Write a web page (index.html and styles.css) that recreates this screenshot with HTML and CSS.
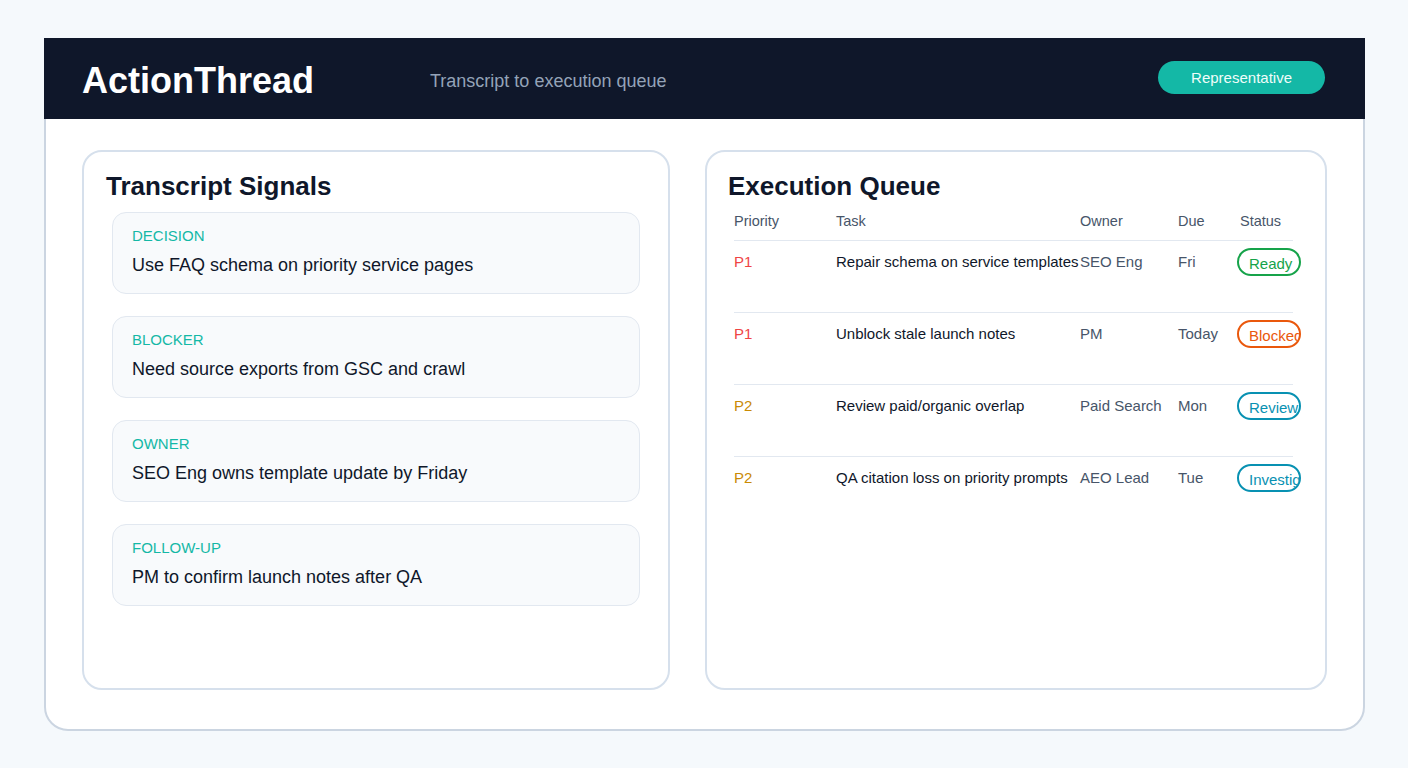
FILE: index.html
```html
<!DOCTYPE html>
<html lang="en">
<head>
<meta charset="utf-8">
<title>ActionThread</title>
<link rel="stylesheet" href="styles.css">
</head>
<body>
<div class="frame">
  <header class="topbar">
    <h1 class="brand">ActionThread</h1>
    <p class="tagline">Transcript to execution queue</p>
    <span class="role">Representative</span>
  </header>
  <main class="panels">
    <section class="card card-signals">
      <h2 class="card-title">Transcript Signals</h2>
      <ul class="signals">
        <li class="signal">
          <span class="signal-kind">DECISION</span>
          <span class="signal-text">Use FAQ schema on priority service pages</span>
        </li>
        <li class="signal">
          <span class="signal-kind">BLOCKER</span>
          <span class="signal-text">Need source exports from GSC and crawl</span>
        </li>
        <li class="signal">
          <span class="signal-kind">OWNER</span>
          <span class="signal-text">SEO Eng owns template update by Friday</span>
        </li>
        <li class="signal">
          <span class="signal-kind">FOLLOW-UP</span>
          <span class="signal-text">PM to confirm launch notes after QA</span>
        </li>
      </ul>
    </section>
    <section class="card">
      <h2 class="card-title">Execution Queue</h2>
      <div class="queue">
        <div class="qrow qhead">
          <span>Priority</span><span>Task</span><span>Owner</span><span>Due</span><span class="status-h">Status</span>
        </div>
        <div class="qrow">
          <span class="pri p1">P1</span>
          <span class="task">Repair schema on service templates</span>
          <span class="muted">SEO Eng</span>
          <span class="muted">Fri</span>
          <span><span class="badge ready">Ready</span></span>
        </div>
        <div class="qrow">
          <span class="pri p1">P1</span>
          <span class="task">Unblock stale launch notes</span>
          <span class="muted">PM</span>
          <span class="muted">Today</span>
          <span><span class="badge blocked">Blocked</span></span>
        </div>
        <div class="qrow">
          <span class="pri p2">P2</span>
          <span class="task">Review paid/organic overlap</span>
          <span class="muted">Paid Search</span>
          <span class="muted">Mon</span>
          <span><span class="badge review">Review</span></span>
        </div>
        <div class="qrow">
          <span class="pri p2">P2</span>
          <span class="task">QA citation loss on priority prompts</span>
          <span class="muted">AEO Lead</span>
          <span class="muted">Tue</span>
          <span><span class="badge review">Investigating</span></span>
        </div>
      </div>
    </section>
  </main>
</div>
</body>
</html>
```
FILE: styles.css
```css
* { box-sizing: border-box; }

body {
  margin: 0;
  background: #f5f9fc;
  font-family: "Liberation Sans", Arial, sans-serif;
  color: #0f172a;
}

.frame {
  margin: 38px 43px 0 44px;
  height: 693px;
  background: #ffffff;
  border: 2px solid #cbd5e1;
  border-radius: 24px;
}

.topbar {
  margin: -2px -2px 0 -2px;
  height: 81px;
  background: #0f172a;
  display: flex;
  align-items: center;
  padding: 0 40px 0 38px;
  gap: 116px;
}

.brand {
  margin: 0;
  font-size: 36px;
  font-weight: 700;
  color: #ffffff;
  line-height: 40px;
  padding-top: 5px;
}

.tagline {
  margin: 0;
  font-size: 18px;
  color: #94a3b8;
  padding-top: 5px;
}

.role {
  margin-left: auto;
  background: #14b8a6;
  color: #f0fdfa;
  font-size: 15px;
  line-height: 33px;
  height: 33px;
  padding: 0 33px;
  border-radius: 17px;
  margin-top: -2px;
}

.panels {
  display: grid;
  grid-template-columns: 588px 622px;
  gap: 35px;
  padding: 31px 36px 0 36px;
}

.card {
  height: 540px;
  border: 2px solid #d6e0ec;
  border-radius: 20px;
  padding: 19px 22px 0 21px;
}

.card-signals { padding-left: 22px; }

.card-title {
  margin: 0;
  font-size: 26px;
  line-height: 30px;
  font-weight: 700;
  color: #0f172a;
}

.signals {
  list-style: none;
  margin: 11px 6px 0 6px;
  padding: 0;
  display: flex;
  flex-direction: column;
  gap: 22px;
}

.signal {
  display: flex;
  flex-direction: column;
  gap: 9px;
  background: #f8fafc;
  border: 1px solid #e2e8f0;
  border-radius: 14px;
  padding: 14px 19px 17px 19px;
}

.signal-kind {
  font-size: 15px;
  line-height: 18px;
  color: #14b8a6;
}

.signal-text {
  font-size: 18px;
  line-height: 22px;
  color: #0f172a;
}

.queue {
  margin: 0 0 0 6px;
  width: 559px;
}

.qrow {
  display: grid;
  grid-template-columns: 102px 244px 98px 59px 56px;
  height: 72px;
  border-top: 1px solid #e2e8f0;
  padding-top: 7px;
  align-items: start;
  font-size: 15px;
  line-height: 27px;
}

.qrow > span { white-space: nowrap; }

.qhead {
  height: 39px;
  border-top: none;
  padding-top: 0;
  align-items: center;
  font-size: 14.5px;
  line-height: 18px;
  color: #475569;
}

.status-h { padding-left: 3px; }

.pri.p1 { color: #ef4444; }
.pri.p2 { color: #ca8a04; }

.task { color: #0f172a; }
.muted { color: #475569; }

.badge {
  display: inline-block;
  width: 64px;
  height: 28px;
  line-height: 24px;
  padding: 2px 0 0 10px;
  border: 2px solid currentColor;
  border-radius: 14px;
  overflow: hidden;
  white-space: nowrap;
  font-size: 15px;
}

.badge.ready { color: #16a34a; }
.badge.blocked { color: #ea580c; }
.badge.review { color: #0891b2; }
```
